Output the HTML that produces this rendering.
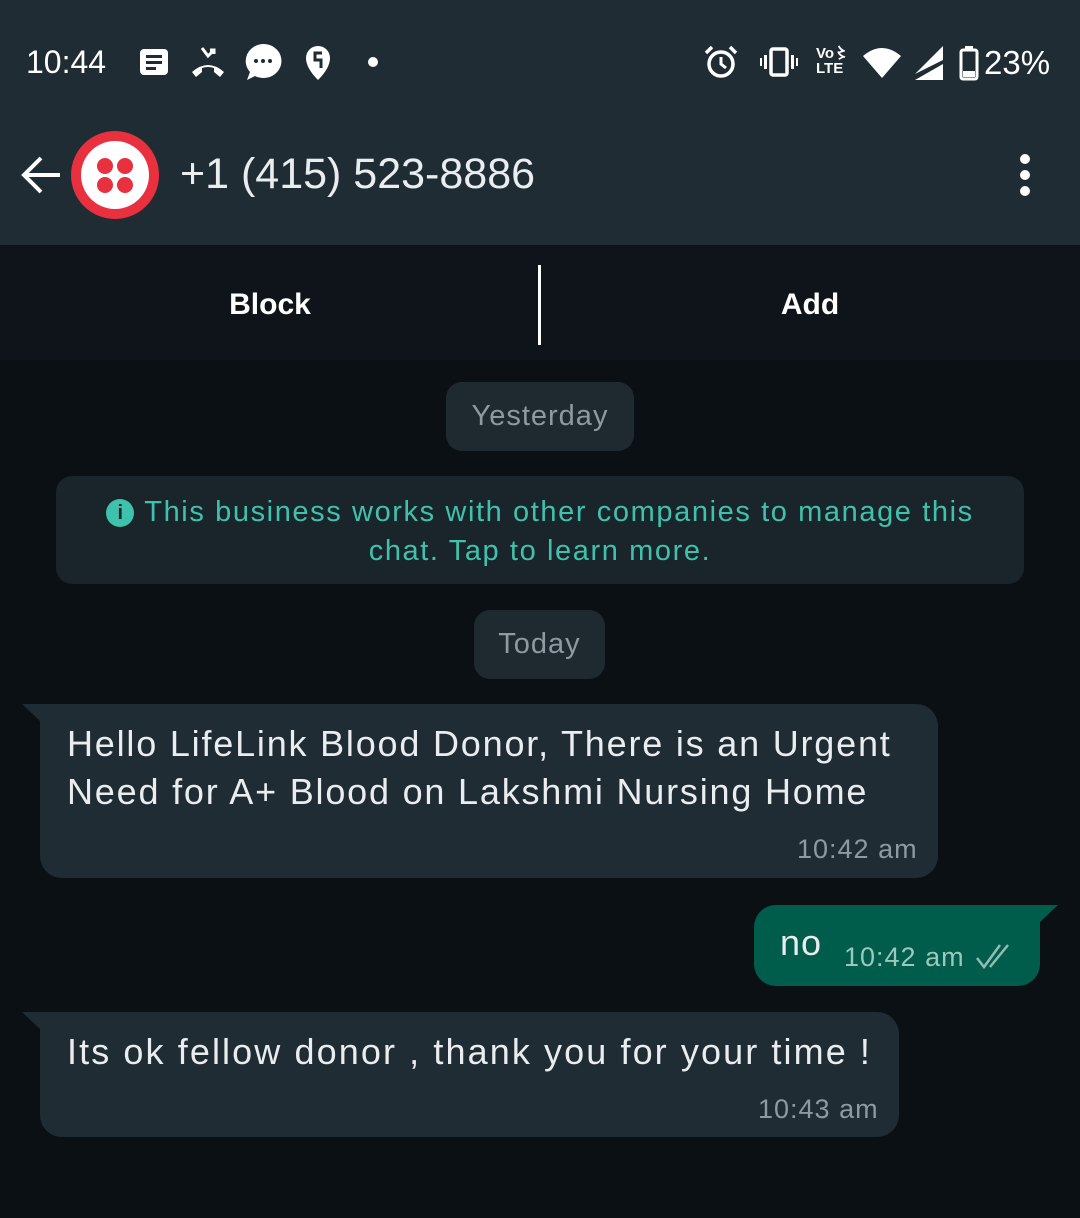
<!DOCTYPE html>
<html><head><meta charset="utf-8"><style>
*{margin:0;padding:0;box-sizing:border-box}
body{width:1080px;height:1218px;background:#0b1014;font-family:"Liberation Sans","DejaVu Sans",sans-serif;position:relative;overflow:hidden;color:#e9edef}
.a{position:absolute}
.hdr{left:0;top:0;width:1080px;height:245px;background:#1f2c34}
.bar{left:0;top:245px;width:1080px;height:115px;background:#0e1419}
.pill{background:#1f2a30;border-radius:16px;color:#8d9aa1;font-size:29px;text-align:center;letter-spacing:1px}
.bub{background:#202c33;border-radius:22px}
.t{color:#8d9aa1;font-size:27px;letter-spacing:1px}
.m{font-size:36px;line-height:48px;color:#e9edef;letter-spacing:1.8px}
</style></head><body>
<div class="a hdr"></div>
<div class="a" style="left:26px;top:44px;font-size:32px;color:#fff">10:44</div>
<svg class="a" style="left:138px;top:46px" width="32" height="32"><rect x="2" y="3" width="28" height="26" rx="4" fill="#fff"/><rect x="8" y="9" width="16" height="3" fill="#1f2c34"/><rect x="8" y="15" width="16" height="3" fill="#1f2c34"/><rect x="8" y="21" width="10" height="3" fill="#1f2c34"/></svg>
<svg class="a" style="left:188px;top:44px" width="40" height="36"><path d="M4 28 Q20 14 36 28 L32 33 L26 28 L26 24 Q20 22 14 24 L14 28 L8 33Z" fill="#fff"/><path d="M14 4 L20 12 L26 6 M22 6 L26 6 L26 10" stroke="#fff" stroke-width="3" fill="none"/></svg>
<svg class="a" style="left:243px;top:42px" width="40" height="40"><path d="M20 2 A18 17 0 1 1 12 34 L4 38 L7 30 A18 17 0 0 1 20 2Z" fill="#fff"/><circle cx="13" cy="19" r="2" fill="#1f2c34"/><circle cx="20" cy="19" r="2" fill="#1f2c34"/><circle cx="27" cy="19" r="2" fill="#1f2c34"/></svg>
<svg class="a" style="left:304px;top:44px" width="28" height="38"><path d="M14 2 A12 12 0 0 1 26 14 Q26 24 14 36 Q2 24 2 14 A12 12 0 0 1 14 2Z" fill="#fff"/><path d="M18 9 L11 9 L11 16 L17 16 L17 24" stroke="#1f2c34" stroke-width="3" fill="none"/></svg>
<div class="a" style="left:368px;top:57px;width:10px;height:10px;border-radius:50%;background:#fff"></div>
<svg class="a" style="left:703px;top:44px" width="36" height="36"><circle cx="18" cy="20" r="12" stroke="#fff" stroke-width="3.5" fill="none"/><path d="M18 13 L18 20 L23 24" stroke="#fff" stroke-width="3" fill="none"/><path d="M3 9 L9 3 M33 9 L27 3" stroke="#fff" stroke-width="3.5"/></svg>
<svg class="a" style="left:760px;top:46px" width="38" height="32"><rect x="11" y="3" width="16" height="26" rx="2" stroke="#fff" stroke-width="3.5" fill="none"/><rect x="4" y="9" width="3" height="14" fill="#fff"/><rect x="31" y="9" width="3" height="14" fill="#fff"/><rect x="0" y="12" width="2" height="8" fill="#fff"/><rect x="36" y="12" width="2" height="8" fill="#fff"/></svg>
<div class="a" style="left:816px;top:46px;font-size:15px;font-weight:bold;line-height:15px;color:#fff">Vo〻<br>LTE</div>
<svg class="a" style="left:862px;top:46px" width="40" height="34"><path d="M1 10 Q20 -6 39 10 L20 32Z" fill="#fff"/></svg>
<svg class="a" style="left:913px;top:44px" width="32" height="38"><path d="M30 2 L30 16 L2 30Z" fill="#fff"/><path d="M30 20 L30 36 L2 36Z" fill="#fff"/></svg>
<svg class="a" style="left:958px;top:45px" width="24" height="36"><rect x="7" y="1" width="8" height="4" fill="#fff"/><rect x="3" y="5" width="16" height="29" rx="2" stroke="#fff" stroke-width="3" fill="none"/><rect x="5" y="26" width="12" height="6" fill="#fff"/></svg>
<div class="a" style="left:984px;top:44px;font-size:33px;color:#fff">23%</div>
<svg class="a" style="left:20px;top:154px" width="44" height="42"><path d="M40 21 L4 21 M21 4 L4 21 L21 38" stroke="#fff" stroke-width="4" fill="none"/></svg>
<div class="a" style="left:71px;top:131px;width:88px;height:88px;border-radius:50%;background:#e8303f"></div>
<div class="a" style="left:81px;top:141px;width:68px;height:68px;border-radius:50%;background:#fff"></div>
<svg class="a" style="left:81px;top:141px" width="68" height="68"><circle cx="24" cy="25" r="8" fill="#e8303f"/><circle cx="44" cy="25" r="8" fill="#e8303f"/><circle cx="24" cy="44" r="8" fill="#e8303f"/><circle cx="44" cy="44" r="8" fill="#e8303f"/></svg>
<div class="a" style="left:180px;top:150px;font-size:43px;color:#e9edef">+1 (415) 523-8886</div>
<svg class="a" style="left:1014px;top:153px" width="22" height="46"><circle cx="11" cy="6" r="5" fill="#fff"/><circle cx="11" cy="22" r="5" fill="#fff"/><circle cx="11" cy="38" r="5" fill="#fff"/></svg>
<div class="a bar"></div>
<div class="a" style="left:0;top:288px;width:540px;text-align:center;font-size:30px;font-weight:bold;color:#fff">Block</div>
<div class="a" style="left:540px;top:288px;width:540px;text-align:center;font-size:30px;font-weight:bold;color:#fff">Add</div>
<div class="a" style="left:538px;top:265px;width:3px;height:80px;background:#fff"></div>
<div class="a pill" style="left:446px;top:382px;width:188px;height:69px;line-height:69px">Yesterday</div>
<div class="a" style="left:56px;top:476px;width:968px;height:108px;background:#1a252b;border-radius:16px;color:#3fc2ad;font-size:29px;text-align:center;line-height:39px;padding-top:17px;letter-spacing:1.6px"><span style="display:inline-block;width:28px;height:28px;border-radius:50%;background:#3fc2ad;color:#1a252b;font-size:20px;font-weight:bold;line-height:28px;vertical-align:2px;margin-right:10px;letter-spacing:0">i</span>This business works with other companies to manage this<br>chat. Tap to learn more.</div>
<div class="a pill" style="left:474px;top:610px;width:131px;height:69px;line-height:69px">Today</div>
<svg class="a" style="left:20px;top:704px" width="40" height="40"><path d="M2 0 L40 0 L40 36Z" fill="#202c33"/></svg>
<div class="a bub" style="left:40px;top:704px;width:898px;height:174px;border-top-left-radius:0"></div>
<div class="a m" style="left:67px;top:720px">Hello LifeLink Blood Donor, There is an Urgent<br>Need for A+ Blood on Lakshmi Nursing Home</div>
<div class="a t" style="left:797px;top:834px">10:42 am</div>
<svg class="a" style="left:1020px;top:905px" width="40" height="40"><path d="M0 0 L38 0 L0 36Z" fill="#005c4b"/></svg>
<div class="a" style="left:754px;top:905px;width:286px;height:81px;background:#005c4b;border-radius:22px;border-top-right-radius:0"></div>
<div class="a" style="left:780px;top:922px;font-size:36px;color:#e9edef;letter-spacing:1px">no</div>
<div class="a" style="left:844px;top:942px;font-size:27px;color:#9cc7bd;letter-spacing:1px">10:42 am</div>
<svg class="a" style="left:974px;top:942px" width="44" height="30"><path d="M3 16 L10 25 L26 3 M16 25 L34 3" stroke="#8fbdb3" stroke-width="2.5" fill="none"/></svg>
<svg class="a" style="left:20px;top:1012px" width="40" height="40"><path d="M2 0 L40 0 L40 36Z" fill="#202c33"/></svg>
<div class="a bub" style="left:40px;top:1012px;width:859px;height:125px;border-top-left-radius:0"></div>
<div class="a m" style="left:67px;top:1028px;letter-spacing:2.1px">Its ok fellow donor , thank you for your time !</div>
<div class="a t" style="left:758px;top:1094px">10:43 am</div>
</body></html>
